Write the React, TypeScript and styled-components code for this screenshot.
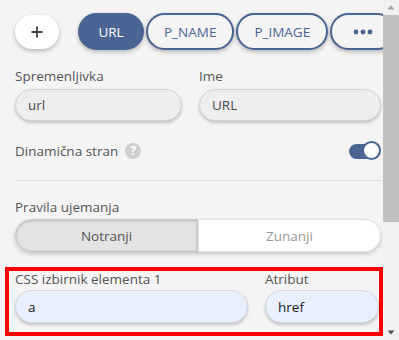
import styled, { createGlobalStyle } from 'styled-components'

const BLUE = '#4a6594'

const Global = createGlobalStyle`
  html, body {
    margin: 0;
    height: 340px;
    overflow: hidden;
    background: #f4f4f4;
  }
  body {
    font-family: "Open Sans", "Noto Sans", sans-serif;
    font-size: 13px;
    color: #4a4a4a;
  }
`

const Frame = styled.div`
  display: flex;
  height: 340px;
`

const Panel = styled.div`
  flex: 1;
  min-width: 0;
  overflow: hidden;
  background: #f4f4f4;
`

const ScrollBar = styled.div`
  flex: none;
  width: 16px;
  display: flex;
  flex-direction: column;
  background: #f1f1f1;
`

const ScrollButton = styled.div`
  height: 15px;
  display: flex;
  align-items: center;
  justify-content: center;
`

const Thumb = styled.div`
  height: 207px;
  background: #c1c1c1;
`

const Track = styled.div`
  flex: 1;
`

const Content = styled.div`
  padding: 13px 2px 0 15px;
`

const Toolbar = styled.div`
  display: flex;
  align-items: center;
  gap: 2px;
  height: 37px;
`

const AddButton = styled.button`
  flex: none;
  width: 44px;
  height: 34px;
  margin-right: 17px;
  border: none;
  border-radius: 17px;
  background: #fff;
  box-shadow: 0 2px 4px rgba(0, 0, 0, 0.25);
  display: flex;
  align-items: center;
  justify-content: center;
  padding: 0;
`

const Pill = styled.button<{ $active?: boolean }>`
  flex: none;
  box-sizing: border-box;
  min-width: 66px;
  height: 37px;
  padding: 0 16px;
  border: 2px solid ${BLUE};
  border-radius: 19px;
  background: ${p => (p.$active ? BLUE : '#f4f4f4')};
  color: ${p => (p.$active ? '#fff' : BLUE)};
  font: inherit;
  font-size: 13.5px;
  box-shadow: 0 2px 4px rgba(0, 0, 0, 0.25);
  display: flex;
  align-items: center;
  justify-content: center;
`

const Fields = styled.div<{ $cols: string }>`
  display: grid;
  grid-template-columns: ${p => p.$cols};
  column-gap: 17px;
`

const Field = styled.div`
  display: flex;
  flex-direction: column;
`

const Label = styled.div<{ $h?: number }>`
  line-height: ${p => p.$h ?? 20}px;
  height: ${p => p.$h ?? 20}px;
  color: #555;
  font-size: 13.5px;
  white-space: nowrap;
`

const Input = styled.div<{ $filled?: boolean; $h?: number }>`
  box-sizing: border-box;
  height: ${p => p.$h ?? 32}px;
  margin-top: ${p => (p.$filled ? 2 : 3)}px;
  padding: 0 12px;
  border: 1px solid ${p => (p.$filled ? '#d3d8e0' : '#d4d4d4')};
  border-radius: 17px;
  background: ${p => (p.$filled ? '#e8f0fe' : '#eeeeee')};
  color: ${p => (p.$filled ? '#1a1a1a' : '#4a4a4a')};
  font-size: 13.5px;
  box-shadow: 0 2px 3px rgba(0, 0, 0, 0.2);
  display: flex;
  align-items: center;
`

const TopFields = styled(Fields)`
  margin-top: 16px;
`

const SwitchRow = styled.div`
  margin-top: 20px;
  height: 20px;
  display: flex;
  align-items: center;
  gap: 7px;
  color: #555;
  font-size: 13.5px;
`

const Help = styled.span`
  width: 16px;
  height: 16px;
  border-radius: 50%;
  background: #cfcfcf;
  color: #fff;
  font-weight: 700;
  font-size: 12px;
  line-height: 16px;
  text-align: center;
`

const Toggle = styled.span`
  position: relative;
  margin-left: auto;
  width: 32px;
  height: 20px;
`

const ToggleTrack = styled.span`
  position: absolute;
  left: 0;
  top: 3px;
  width: 26px;
  height: 15px;
  border-radius: 8px;
  background: ${BLUE};
`

const Knob = styled.span`
  position: absolute;
  right: 0;
  top: 0;
  box-sizing: border-box;
  width: 19px;
  height: 19px;
  border-radius: 50%;
  background: #fff;
  border: 2px solid ${BLUE};
`

const Divider = styled.hr`
  margin: 19px 0 0;
  border: none;
  border-top: 1px solid #dcdcdc;
`

const SectionLabel = styled(Label)`
  margin-top: 16px;
`

const Segmented = styled.div`
  margin-top: 2px;
  display: grid;
  grid-template-columns: 1fr 1fr;
  height: 33px;
  border-radius: 17px;
  box-shadow: 0 2px 4px rgba(0, 0, 0, 0.2);
`

const Segment = styled.div<{ $active?: boolean }>`
  box-sizing: border-box;
  display: flex;
  align-items: center;
  justify-content: center;
  font-size: 13.5px;
  border: 1px solid ${p => (p.$active ? '#c4c4c4' : '#e2e2e2')};
  background: ${p => (p.$active ? '#e3e3e3' : '#fff')};
  color: ${p => (p.$active ? '#555' : '#999')};
  box-shadow: ${p => (p.$active ? 'inset 0 1px 3px rgba(0,0,0,0.2)' : 'none')};
  border-radius: ${p => (p.$active ? '17px 0 0 17px' : '0 17px 17px 0')};
`

const Highlight = styled.div`
  margin: 15px -2px 0 -10px;
  padding: 0 0 9px 6px;
  border: 4px solid #ff0000;
`

function PlusIcon() {
  return (
    <svg width='12' height='12' viewBox='0 0 12 12'>
      <path d='M6 0.5v11M0.5 6h11' stroke='#444' strokeWidth='1.8' />
    </svg>
  )
}

function DotsIcon() {
  return (
    <svg width='20' height='6' viewBox='0 0 20 6'>
      <circle cx='3' cy='3' r='2.4' fill={BLUE} />
      <circle cx='10' cy='3' r='2.4' fill={BLUE} />
      <circle cx='17' cy='3' r='2.4' fill={BLUE} />
    </svg>
  )
}

function Arrow({ down, color }: { down?: boolean, color: string }) {
  return (
    <svg width='8' height='5' viewBox='0 0 8 5'>
      <path d={down ? 'M0.5 0.5H7.5L4 4.5Z' : 'M0.5 4.5H7.5L4 0.5Z'} fill={color} />
    </svg>
  )
}

export default function App() {
  return (
    <Frame>
      <Global />
      <Panel>
        <Content>

          {/* Tabs */}
          <Toolbar>
            <AddButton><PlusIcon /></AddButton>
            <Pill $active>URL</Pill>
            <Pill>P_NAME</Pill>
            <Pill>P_IMAGE</Pill>
            <Pill><DotsIcon /></Pill>
          </Toolbar>

          <TopFields $cols='167px 1fr'>
            <Field>
              <Label>Spremenljivka</Label>
              <Input>url</Input>
            </Field>
            <Field>
              <Label>Ime</Label>
              <Input>URL</Input>
            </Field>
          </TopFields>

          <SwitchRow>
            Dinamična stran
            <Help>?</Help>
            <Toggle><ToggleTrack /><Knob /></Toggle>
          </SwitchRow>

          <Divider />

          <SectionLabel>Pravila ujemanja</SectionLabel>
          <Segmented>
            <Segment $active>Notranji</Segment>
            <Segment>Zunanji</Segment>
          </Segmented>

          {/* Selected rule */}
          <Highlight>
            <Fields $cols='1fr 114px'>
              <Field>
                <Label $h={17}>CSS izbirnik elementa 1</Label>
                <Input $filled $h={33}>a</Input>
              </Field>
              <Field>
                <Label $h={17}>Atribut</Label>
                <Input $filled $h={33}>href</Input>
              </Field>
            </Fields>
          </Highlight>

        </Content>
      </Panel>

      <ScrollBar>
        <ScrollButton><Arrow color='#a3a3a3' /></ScrollButton>
        <Thumb />
        <Track />
        <ScrollButton><Arrow down color='#505050' /></ScrollButton>
      </ScrollBar>
    </Frame>
  )
}
